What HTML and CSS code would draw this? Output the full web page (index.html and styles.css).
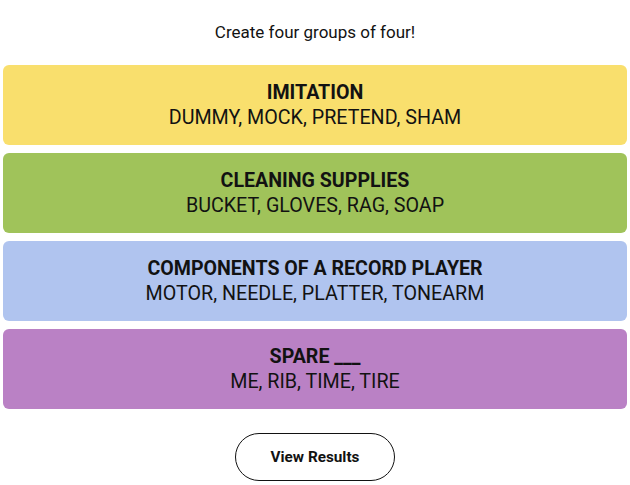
FILE: index.html
```html
<!DOCTYPE html>
<html>
<head>
<meta charset="utf-8">
<link rel="stylesheet" href="styles.css">
</head>
<body>
<main class="page">
  <p class="prompt">Create four groups of four!</p>
  <section class="groups">
    <div class="group yellow">
      <h3 class="group-title">IMITATION</h3>
      <p class="group-members">DUMMY, MOCK, PRETEND, SHAM</p>
    </div>
    <div class="group green">
      <h3 class="group-title">CLEANING SUPPLIES</h3>
      <p class="group-members">BUCKET, GLOVES, RAG, SOAP</p>
    </div>
    <div class="group blue">
      <h3 class="group-title">COMPONENTS OF A RECORD PLAYER</h3>
      <p class="group-members">MOTOR, NEEDLE, PLATTER, TONEARM</p>
    </div>
    <div class="group purple">
      <h3 class="group-title">SPARE ___</h3>
      <p class="group-members">ME, RIB, TIME, TIRE</p>
    </div>
  </section>
  <div class="actions">
    <button class="results-btn">View Results</button>
  </div>
</main>
</body>
</html>
```
FILE: styles.css
```css
* { box-sizing: border-box; }
html, body { margin: 0; padding: 0; background: #fff; }
body {
  font-family: Roboto, "Liberation Sans", sans-serif;
  color: #121212;
}
.page {
  width: 630px;
  padding: 0 3px;
  display: flex;
  flex-direction: column;
}
.prompt {
  margin: 0;
  height: 65px;
  padding-top: 21px;
  text-align: center;
  font-size: 17px;
  line-height: 22px;
}
.groups {
  display: flex;
  flex-direction: column;
  gap: 8px;
}
.group {
  height: 80px;
  border-radius: 6px;
  display: flex;
  flex-direction: column;
  align-items: center;
  justify-content: center;
}
.yellow { background: #f9df6d; }
.green { background: #a0c35a; }
.blue { background: #b0c4ef; }
.purple { background: #ba81c5; }
.group-title {
  margin: 0;
  font-size: 19.6px;
  font-weight: 700;
  line-height: 25px;
}
.group-members {
  margin: 0;
  font-size: 19.7px;
  line-height: 25px;
}
.actions {
  display: flex;
  justify-content: center;
  padding-top: 24px;
}
.results-btn {
  width: 160px;
  height: 48px;
  border: 1px solid #121212;
  border-radius: 24px;
  background: #fff;
  color: #121212;
  font-family: inherit;
  font-size: 15.3px;
  font-weight: 700;
}
```
